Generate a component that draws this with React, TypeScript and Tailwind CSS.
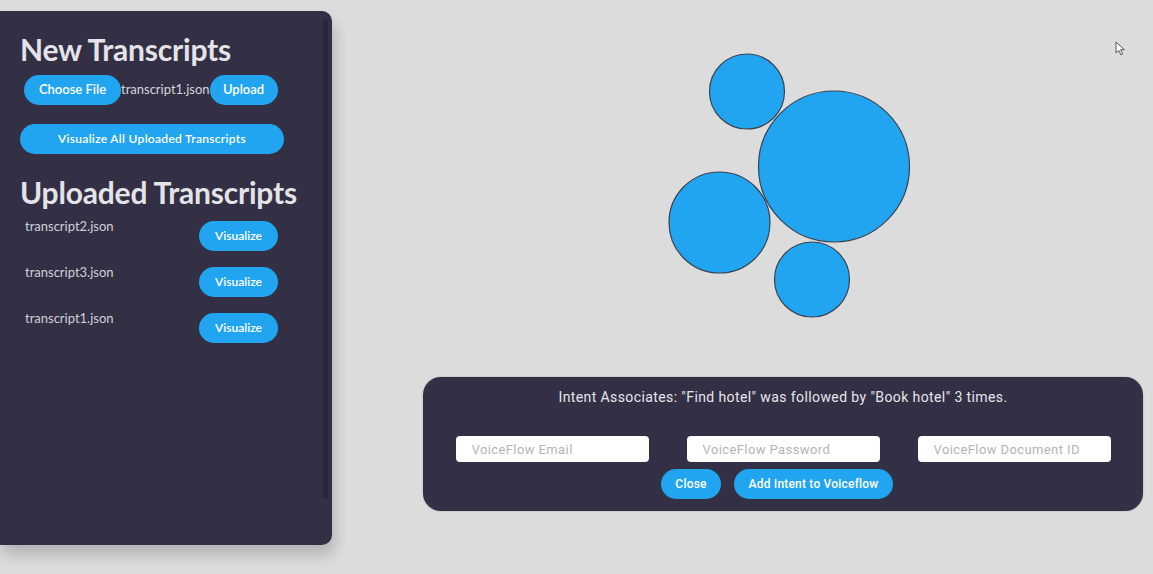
import React from "react";

const heading = "font-['Lato',sans-serif] font-bold text-[30px] leading-[34px] text-[#e3e3e8] tracking-[-0.2px]";
const pill = "rounded-full bg-[#22a5f1] text-white text-[12px] font-semibold font-['Lato',sans-serif] h-[30px] flex items-center justify-center";

const uploaded = ["transcript2.json", "transcript3.json", "transcript1.json"];

const circles = [
  { cx: 415, cy: 91.5, r: 37.5 },
  { cx: 502, cy: 166.5, r: 75.5 },
  { cx: 387.5, cy: 222.5, r: 50.5 },
  { cx: 480, cy: 279.5, r: 37.5 },
];

function Sidebar() {
  return (
    <aside className="relative mt-[11px] h-[534px] w-[332px] shrink-0 rounded-r-[10px] bg-[#332f45] pl-[20px] pt-[21px] shadow-[3px_10px_14px_rgba(0,0,0,0.18)]">
      <h2 className={heading}>New Transcripts</h2>
      <div className="mt-[9px] flex items-center pl-[4px]">
        <button className={`${pill} w-[97px] text-[13px]`}>Choose File</button>
        <span className="font-['Lato',sans-serif] text-[13px] text-[#d4d4da]">transcript1.json</span>
        <button className={`${pill} w-[68px] text-[13px]`}>Upload</button>
      </div>
      <button className={`${pill} mt-[19px] w-[264px] text-[11px] tracking-[0.3px]`}>Visualize All Uploaded Transcripts</button>
      <h2 className={`${heading} mt-[21px]`}>Uploaded Transcripts</h2>
      <ul className="mt-[9px] flex w-[258px] flex-col gap-[13px] pl-[5px]">
        {uploaded.map((name, i) => (
          <li key={i} className="flex items-start justify-between">
            <span className="font-['Lato',sans-serif] text-[13px] leading-[16px] text-[#cfcfd6]">{name}</span>
            <button className={`${pill} mt-[3px] w-[79px] text-[11px]`}>Visualize</button>
          </li>
        ))}
      </ul>
      <div className="absolute right-[4px] top-[8px] h-[480px] w-[5px] rounded-full bg-[#29263a]" />
    </aside>
  );
}

function IntentPanel() {
  const input = "h-[26px] w-[193px] rounded-[4px] bg-white pl-[16px] font-['Roboto',sans-serif] text-[13px] tracking-[0.4px] text-[#333] placeholder:text-[#b4b4b8] outline-none";
  return (
    <div className="ml-[91px] mr-[10px] flex h-[134px] flex-col items-center rounded-[18px] bg-[#332f45] pt-[12px] font-['Roboto',sans-serif] shadow-[0_0_2px_rgba(0,0,0,0.25)]">
      <p className="text-[14px] leading-[16px] tracking-[0.4px] text-[#e6e6ea]">
        Intent Associates: "Find hotel" was followed by "Book hotel" 3 times.
      </p>
      <div className="mt-[31px] flex justify-center gap-[38px]">
        <input className={input} placeholder="VoiceFlow Email" />
        <input className={input} placeholder="VoiceFlow Password" />
        <input className={input} placeholder="VoiceFlow Document ID" />
      </div>
      <div className="mt-[7px] flex gap-[13px] pr-[12px]">
        <button className="h-[30px] w-[60px] rounded-full bg-[#22a5f1] text-[12px] font-medium tracking-[0.2px] text-white">Close</button>
        <button className="h-[30px] w-[159px] rounded-full bg-[#22a5f1] text-[12px] font-medium tracking-[0.2px] text-white">Add Intent to Voiceflow</button>
      </div>
    </div>
  );
}

export default function App() {
  return (
    <div className="flex h-[574px] w-[1153px] overflow-hidden bg-[#dcdcdc]">
      <Sidebar />
      <main className="relative flex flex-1 flex-col">
        <svg width="821" height="377" className="block">
          {circles.map((c, i) => (
            <circle key={i} cx={c.cx} cy={c.cy} r={c.r} fill="#22a5f1" stroke="#3a4252" strokeWidth="1.2" />
          ))}
        </svg>
        <IntentPanel />
        <svg className="absolute left-[783px] top-[41px]" width="11" height="15" viewBox="0 0 11 15">
          <path d="M1 1 L1 12 L3.8 9.4 L5.8 13.8 L7.6 13 L5.6 8.7 L9.4 8.7 Z" fill="#fff" stroke="#555" strokeWidth="1" strokeLinejoin="round" />
        </svg>
      </main>
    </div>
  );
}
